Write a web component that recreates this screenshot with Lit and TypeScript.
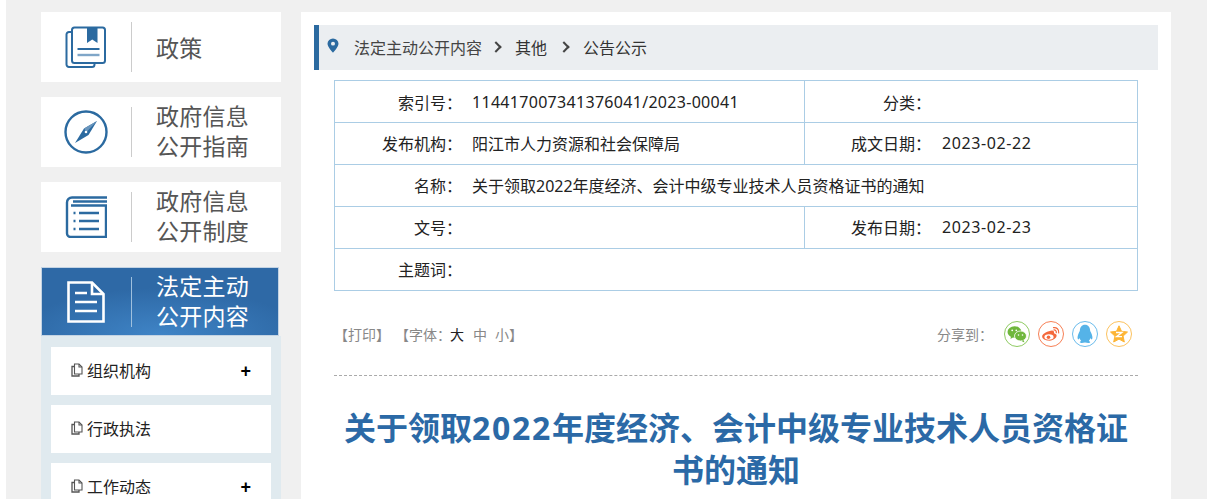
import { LitElement, html, css, svg } from "lit";
import { customElement } from "lit/decorators.js";

const bookIcon = svg`<svg viewBox="0 -0.5 42 42" width="42" height="42" fill="none" stroke="#2b6aa0" stroke-width="2"><path d="M7 5.500H4a2.500 2.500 0 0 0-2.500 2.500V38a2.500 2.500 0 0 0 2.500 2.500h23a2.500 2.500 0 0 0 2.500-2.500v-1.500"/><rect x="7" y="1" width="33" height="35.500" rx="2.500" stroke-width="2"/><path d="M22 1h10.500v15.500L27.250 13 22 16.500z" fill="#2b6aa0" stroke="none"/><path d="M12.500 22.500h22"/><path d="M12.500 28.500h22" stroke="#7fa6c8" stroke-width="2.400"/></svg>`;
const compassIcon = svg`<svg viewBox="0 0 44 44" width="44" height="44" fill="none"><circle cx="22" cy="22" r="20.500" stroke="#2b6aa0" stroke-width="2.400"/><path d="M33 11 20 18.500 11 33 24.500 25z" fill="#2b6aa0"/><path d="M33 11 20 18.500 22.500 22z" fill="#6a96bd"/><circle cx="22" cy="22" r="1.300" fill="#fff"/></svg>`;
const listIcon = svg`<svg viewBox="0 0 42 42" width="42" height="42" fill="none" stroke="#2b6aa0"><path d="M42 1.500H7A5 5 0 0 0 2 6.500V37.500a3.500 3.500 0 0 0 3.500 3.500H41V9.500H6" stroke-width="2.400"/><path d="M8 5.500H42" stroke-width="2.400"/><path d="M14 17h20M14 25h20M14 33h20" stroke-width="2.400"/><path d="M8.500 17h2M8.500 25h2M8.500 33h2" stroke-width="2.400"/></svg>`;
const docIcon = svg`<svg viewBox="0 0 38 42" width="38" height="42" fill="none" stroke="#fff" stroke-width="2.600"><path d="M1.500 1.500H25L36.500 13V40.500H1.500z"/><path d="M25 2v11h11"/><path d="M8 12h12M8 21h22M8 30h22"/></svg>`;
const pageIcon = svg`<svg class="pg" viewBox="0 0 12 14" width="12" height="14" fill="none" stroke="#555" stroke-width="1.100"><path d="M3.500 1h4.500l3 3v7H3.500z"/><path d="M8 1v3h3"/><path d="M3.500 3.500H1V13h7v-2" stroke-width="1.300"/></svg>`;
const pinIcon = svg`<svg viewBox="0 0 12 16" width="12" height="15" preserveAspectRatio="none"><path fill-rule="evenodd" d="M6 .5a5.500 5.500 0 0 0-5.500 5.500C.5 9.500 6 15.500 6 15.500S11.500 9.500 11.500 6A5.500 5.500 0 0 0 6 .5zm0 3.500a2 2 0 1 1 0 4 2 2 0 0 1 0-4z" fill="#2b6aa0"/></svg>`;
const wechat = svg`<svg viewBox="0 0 20 18" width="20" height="18"><ellipse cx="7.500" cy="7" rx="7" ry="5.800" fill="#6fb73c"/><path d="M4 11l-.5 3 3-2z" fill="#6fb73c"/><ellipse cx="13.500" cy="11" rx="6" ry="5" fill="#6fb73c" stroke="#fff" stroke-width=".8"/><path d="M16.500 15l1 2.500-3-1.500z" fill="#6fb73c"/><circle cx="5.200" cy="5.300" r=".9" fill="#fff"/><circle cx="9.300" cy="5.300" r=".9" fill="#fff"/><circle cx="11.500" cy="10" r=".8" fill="#fff"/><circle cx="15.500" cy="10" r=".8" fill="#fff"/></svg>`;
const weibo = svg`<svg viewBox="0 0 20 18" width="20" height="18" fill="none"><path d="M8 6.200c3.800-1.600 5.500-.5 5 2 2.600.6 3.400 2.300 2 4.300-1.800 2.500-5.500 3.500-8.500 3C3 15 .8 13.200 1.200 10.800 1.600 9 5 7 8 6.200z" fill="#f4693c"/><ellipse cx="8" cy="12" rx="4.600" ry="2.800" fill="#fff"/><circle cx="7.500" cy="12.200" r="1.800" fill="#f4693c"/><path d="M12.500 2.700c3-.6 5.700 1.800 5.200 5.200M12.800 5c1.500-.3 2.800 1 2.500 2.700" stroke="#f4693c" stroke-width="1.200" stroke-linecap="round"/></svg>`;
const qq = svg`<svg viewBox="0 0 18 20" width="18" height="20"><path d="M9 .8c3.300 0 5 2.500 5.100 5.500.1 1 .5 1.300 1 2.500 1.300 2.600 1.800 5.600.9 6.500-.5.400-1.200-.4-1.800-1.300-.1 1.300-.7 2.200-1.400 2.900 1 .4 1.600 1 1.300 1.500-.3.600-2.500.7-5.100.1-2.600.6-4.800.5-5.100-.1-.3-.5.300-1.100 1.300-1.500-.7-.7-1.300-1.600-1.400-2.900-.6.900-1.300 1.700-1.800 1.300-.9-.9-.4-3.900.9-6.500.5-1.200.9-1.500 1-2.500C4 3.300 5.700.8 9 .8z" fill="#55b3e8"/></svg>`;
const zone = svg`<svg viewBox="0 0 18 18" width="18" height="18"><path d="M9 .8l2.500 5.500 6 .7-4.400 4.100 1.200 5.900L9 14.100 3.700 17l1.200-5.900L.5 7l6-.7z" fill="#fdb535" stroke="#fdb535" stroke-linejoin="round"/><path d="M6 7.500h6L6.500 11.700h5.500" fill="none" stroke="#fff" stroke-width="1.300"/></svg>`;

@customElement("app-root")
export class AppRoot extends LitElement {
  static styles = css`
    :host { display: block; height: 499px; overflow: hidden; background: #fff;
      font-family: "Noto Sans", "Noto Sans CJK SC", sans-serif; }
    .page { margin-left: 6px; height: 499px; background: #f0f0f0; display: flex; align-items: flex-start; padding: 12px 0 0 35px; box-sizing: border-box; overflow: hidden; }
    .side { width: 240px; flex: none; display: flex; flex-direction: column; gap: 15px; }
    .nav { height: 70px; background: #fff; display: flex; align-items: center; }
    .nav .icon { width: 91px; height: 50px; border-right: 1px solid #ccc; display: flex; align-items: center; justify-content: center; flex: none; box-sizing: border-box; }
    .nav .label { margin-left: 24px; font-size: 23px; line-height: 30px; letter-spacing: .25px; color: #555; font-family: "Noto Sans CJK SC", sans-serif; }
    .nav .two { padding-bottom: 4px; }
    .nav.active { height: 67px; margin: 0 2px 0 0; border: 1px solid #c3d3e3; background: radial-gradient(ellipse 60% 70% at 50% 100%, #3f84c6 0%, #2e69a6 100%); }
    .nav.active .icon { width: 90px; border-right-color: #9fc0de; padding-right: 2px; }
    .nav.active .label { color: #fff; }
    .sub { margin-top: -15px; background: #e0eaef; padding: 11px 10px 12px; display: flex; flex-direction: column; gap: 10px; }
    .item { height: 48px; background: #fff; display: flex; align-items: center; padding: 0 20px 2px; box-sizing: border-box; font-size: 16px; color: #222; font-family: "Noto Sans CJK SC", sans-serif; }
    .pg { margin-right: 4px; flex: none; }
    .item .plus { margin-left: auto; font-size: 18px; font-weight: 700; line-height: 1; color: #000; font-family: "Liberation Sans", sans-serif; position: relative; top: 1px; }
    .main { margin-left: 20px; width: 870px; flex: none; background: #fff; padding: 13px 13px 0; box-sizing: border-box; height: 600px; }
    .crumb { height: 45px; background: #ebeef1; border-left: 5px solid #2b6aa0; display: flex; align-items: center; padding: 0 0 2px 8px; box-sizing: border-box; font-size: 16px; color: #333; font-family: "Noto Sans CJK SC", sans-serif; }
    .crumb .pin { display: flex; margin-right: 15px; position: relative; top: -1px; }
    .crumb .sep { margin: 0 15px 0 10px; width: 8px; height: 8px; border: solid #444; border-width: 2px 2px 0 0; transform: rotate(45deg); box-sizing: border-box; }
    .crumb .t1 { color: #444; }
    .crumb .t2 { margin-right: 3px; }
    .tbl { margin: 10px 20px 0; width: 804px; box-sizing: border-box; border: 1px solid #abcde5; border-bottom: none; font-size: 16px; color: #222; }
    .row { height: 42px; box-sizing: border-box; display: flex; align-items: center; border-bottom: 1px solid #abcde5; }
    .row > span, .row > .v { padding-bottom: 1px; }
    .row:first-child > span, .row:first-child > .v { padding-bottom: 0; }
    .k { width: 127px; text-align: right; flex: none; margin-right: 10px; }
    .v { width: 332px; flex: none; height: 100%; display: flex; align-items: center; border-right: 1px solid #abcde5; box-sizing: content-box; }
    .k2 { width: 126px; text-align: right; flex: none; margin-right: 11px; }
    .v3 { flex: 1; }
    .num { letter-spacing: .3px; }
    .date { letter-spacing: .6px; }
    .tools { margin: 0 20px; width: 804px; box-sizing: border-box; height: 85px; border-bottom: 1px dashed #aaa; display: flex; align-items: center; justify-content: space-between; padding: 1px 6px 0 0; font-size: 14px; color: #888; font-family: "Noto Sans CJK SC", sans-serif; }
    .tools .l { display: flex; align-items: center; }
    .tools .gap { margin-left: 5px; }
    .tools .big { color: #222; margin: 0 9px 0 -1px; }
    .tools .mid { margin-right: 8px; }
    .share { display: flex; align-items: center; }
    .share .lab { margin-right: 11px; }
    .sc { width: 26px; height: 26px; border-radius: 50%; box-sizing: border-box; border: 1px solid; display: flex; align-items: center; justify-content: center; margin-left: 8px; }
    .lab + .sc { margin-left: 0; }
    .c1 { border-color: #8fcb62; } .c2 { border-color: #f77f55; } .c3 { border-color: #6bbcec; } .c4 { border-color: #fcc25e; }
    h1 { margin: 31px 20px 0; width: 804px; font-size: 32px; line-height: 42px; font-weight: 700; color: #2b69a6; text-align: center; font-family: "Noto Sans", "Noto Sans CJK SC", sans-serif; }
    h1 .d { letter-spacing: 1.700px; }
  `;

  render() {
    return html`<div class="page">
      <aside class="side">
        <div class="nav"><div class="icon">${bookIcon}</div><div class="label">政策</div></div>
        <div class="nav"><div class="icon">${compassIcon}</div><div class="label two">政府信息<br />公开指南</div></div>
        <div class="nav"><div class="icon">${listIcon}</div><div class="label two">政府信息<br />公开制度</div></div>
        <div class="nav active"><div class="icon">${docIcon}</div><div class="label two">法定主动<br />公开内容</div></div>
        <div class="sub">
          <div class="item">${pageIcon}组织机构<span class="plus">+</span></div>
          <div class="item">${pageIcon}行政执法</div>
          <div class="item">${pageIcon}工作动态<span class="plus">+</span></div>
        </div>
      </aside>
      <main class="main">
        <div class="crumb">
          <span class="pin">${pinIcon}</span><span class="t1">法定主动公开内容</span><span class="sep"></span><span class="t2">其他</span><span class="sep"></span><span>公告公示</span>
        </div>
        <div class="tbl">
          <div class="row"><span class="k">索引号：</span><div class="v num">114417007341376041/2023-00041</div><span class="k2">分类：</span><span class="v3"></span></div>
          <div class="row"><span class="k">发布机构：</span><div class="v">阳江市人力资源和社会保障局</div><span class="k2">成文日期：</span><span class="v3 date">2023-02-22</span></div>
          <div class="row"><span class="k">名称：</span><span class="v3">关于领取2022年度经济、会计中级专业技术人员资格证书的通知</span></div>
          <div class="row"><span class="k">文号：</span><div class="v"></div><span class="k2">发布日期：</span><span class="v3 date">2023-02-23</span></div>
          <div class="row"><span class="k">主题词：</span><span class="v3"></span></div>
        </div>
        <div class="tools">
          <div class="l"><span>【打印】</span><span class="gap">【字体：</span><span class="big">大</span><span class="mid">中</span><span>小】</span></div>
          <div class="share"><span class="lab">分享到：</span>
            <span class="sc c1">${wechat}</span><span class="sc c2">${weibo}</span><span class="sc c3">${qq}</span><span class="sc c4">${zone}</span></div>
        </div>
        <h1>关于领取<span class="d">2022</span>年度经济、会计中级专业技术人员资格证书的通知</h1>
      </main>
    </div>`;
  }
}
